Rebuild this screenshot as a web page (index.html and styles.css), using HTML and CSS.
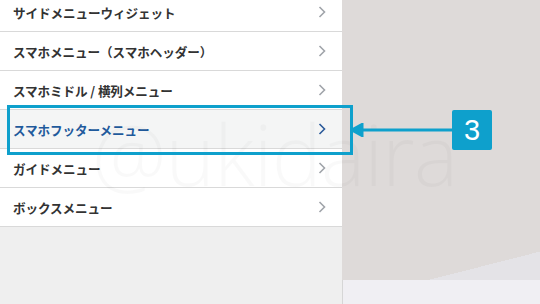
FILE: index.html
```html
<!DOCTYPE html>
<html lang="ja">
<head>
    <meta charset="UTF-8">
    <meta name="viewport" content="width=device-width, initial-scale=1.0">
    <title>スマホフッターメニュー</title>
    <link rel="stylesheet" href="styles.css">
</head>
<body>
    <div class="page">
        <div class="menu">
            <ul class="menu-list">
                <li class="menu-item">サイドメニューウィジェット<svg class="chev" viewBox="0 0 8 12"><polyline points="1.5,1 6.5,6 1.5,11"/></svg></li>
                <li class="menu-item">スマホメニュー（スマホヘッダー）<svg class="chev" viewBox="0 0 8 12"><polyline points="1.5,1 6.5,6 1.5,11"/></svg></li>
                <li class="menu-item">スマホミドル / 横列メニュー<svg class="chev" viewBox="0 0 8 12"><polyline points="1.5,1 6.5,6 1.5,11"/></svg></li>
                <li class="menu-item active">スマホフッターメニュー<svg class="chev" viewBox="0 0 8 12"><polyline points="1.5,1 6.5,6 1.5,11"/></svg></li>
                <li class="menu-item">ガイドメニュー<svg class="chev" viewBox="0 0 8 12"><polyline points="1.5,1 6.5,6 1.5,11"/></svg></li>
                <li class="menu-item">ボックスメニュー<svg class="chev" viewBox="0 0 8 12"><polyline points="1.5,1 6.5,6 1.5,11"/></svg></li>
            </ul>
        </div>
        <div class="preview">
            <div class="preview-top"></div>
            <div class="preview-bottom"></div>
        </div>
    </div>

    <!-- annotation overlay -->
    <div class="watermark">@ukidaira</div>
    <div class="highlight"></div>
    <svg class="arrow" viewBox="0 0 100 14">
        <line x1="8" y1="7" x2="100" y2="7"/>
        <polygon points="0,7 10,1.5 10,12.5"/>
    </svg>
    <div class="badge">3</div>
</body>
</html>
```

FILE: styles.css
```css
body {
    margin: 0;
    width: 540px;
    height: 304px;
    overflow: hidden;
    position: relative;
    font-family: "Noto Sans CJK JP", "Noto Sans", sans-serif;
    background-color: #dedad9;
}

.page {
    display: flex;
    height: 304px;
}

.menu {
    width: 342px;
    background-color: #efefef;
}

.menu-list {
    list-style: none;
    margin: -7px 0 0 0;
    padding: 0;
}

.menu-item {
    display: flex;
    align-items: center;
    justify-content: space-between;
    height: 38px;
    padding: 0 16px 0 13px;
    border-bottom: 1px solid #d9d9d9;
    background-color: #ffffff;
    color: #333333;
    font-size: 12.6px;
    font-weight: 700;
    letter-spacing: -0.1px;
}

.menu-item.active {
    background-color: #f4f5f5;
    color: #1f5a9c;
}

.chev {
    width: 8px;
    height: 12px;
    fill: none;
    stroke: #a0a4aa;
    stroke-width: 1.6;
}

.active .chev {
    stroke: #2b5a9a;
}

.preview {
    flex: 1;
    display: flex;
    flex-direction: column;
}

.preview-top {
    height: 280px;
    background: linear-gradient(165.7deg, #dedad9 0 91.4%, #e4e3e7 91.4%);
}

.preview-bottom {
    flex: 1;
    background-color: #f0eff3;
    border-left: 1px solid #d6d6d6;
}

.watermark {
    position: absolute;
    left: 92px;
    top: 96px;
    font-family: "Open Sans", sans-serif;
    font-size: 84px;
    font-weight: 300;
    color: rgba(0, 0, 0, 0.022);
    letter-spacing: -1px;
    pointer-events: none;
}

.highlight {
    position: absolute;
    left: 7px;
    top: 105px;
    width: 340px;
    height: 44px;
    border: 3px solid #0ea0cc;
}

.arrow {
    position: absolute;
    left: 352px;
    top: 123px;
    width: 100px;
    height: 14px;
    fill: #0ea0cc;
    stroke: #0ea0cc;
    stroke-width: 3;
}

.badge {
    position: absolute;
    left: 452px;
    top: 110px;
    width: 40px;
    height: 40px;
    border-radius: 2px;
    background-color: #0ea0cc;
    color: #ffffff;
    font-family: "Liberation Sans", sans-serif;
    font-size: 29px;
    line-height: 40px;
    text-align: center;
}
```
